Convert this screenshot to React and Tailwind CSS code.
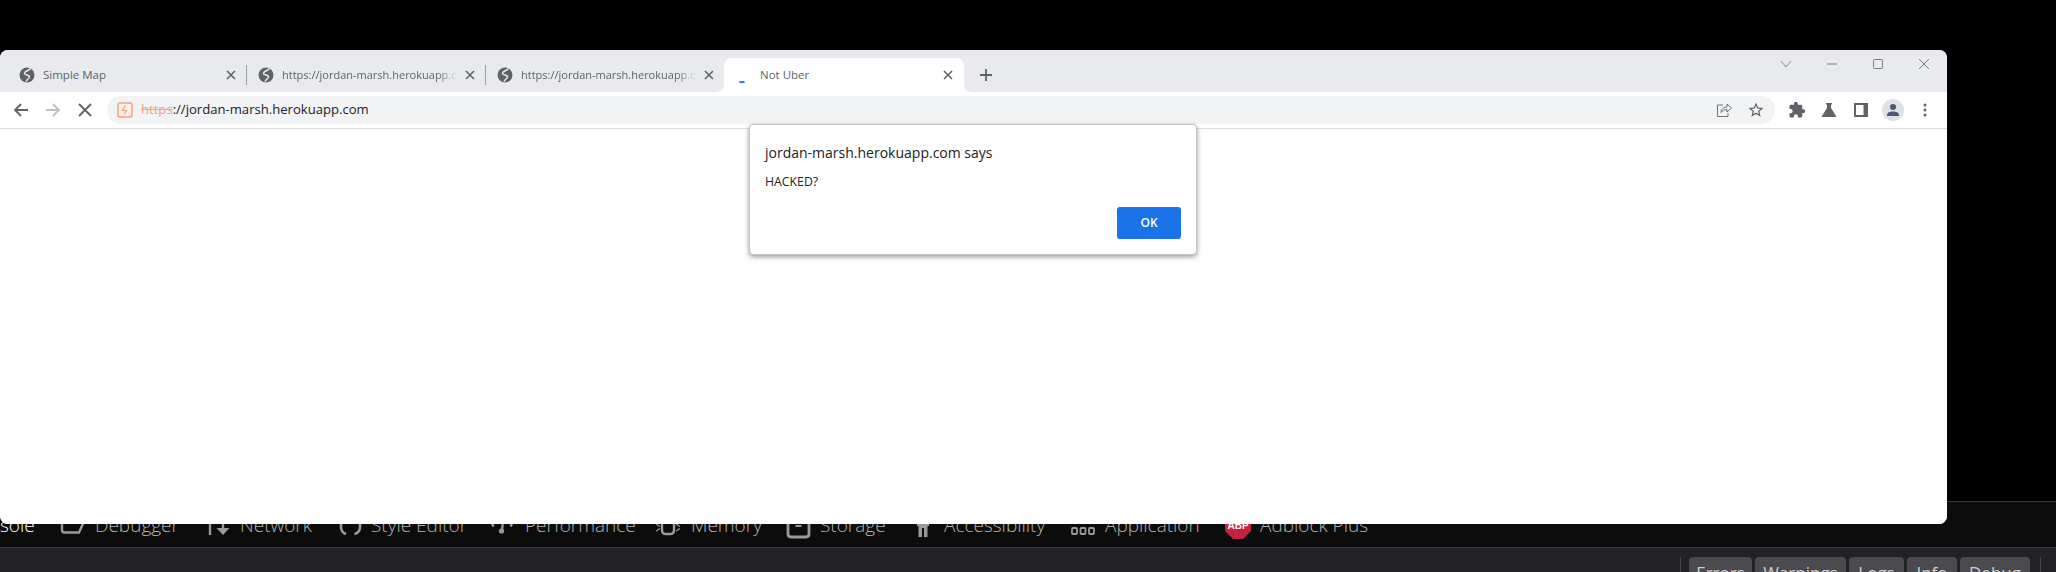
function Globe() {
  return (
    <svg width="18" height="18" viewBox="0 0 18 18" className="shrink-0" fill="none">
      <circle cx="9" cy="9" r="7.500" fill="#5f6368" />
      <path d="M12.500 2.500C10.500 5 6.500 5 6.500 7.500c0 2 4.500 1 5 3 .4 2-2.500 2.500-3.500 5" stroke="#e8eaed" strokeWidth="1.500" />
    </svg>
  );
}

function CloseX({ className = "" }) {
  return (
    <svg width="10" height="10" viewBox="0 0 10 10" className={"shrink-0 " + className} stroke="#5f6368" strokeWidth="1.6" fill="none">
      <path d="M1 1l8 8M9 1l-8 8" />
    </svg>
  );
}

function InactiveTab({ title, fade, className, separator = true }) {
  return (
    <div className={"flex h-[34px] shrink-0 items-center " + className}>
      <Globe />
      <span
        className={
          fade
            ? "ml-[7px] w-[176px] overflow-hidden whitespace-nowrap text-[11px] text-[#5f6368] [mask-image:linear-gradient(to_right,black_88%,transparent)]"
            : "ml-[7px] w-[176px] overflow-hidden whitespace-nowrap text-[11.5px] text-[#5f6368]"
        }
      >
        {title}
      </span>
      <CloseX className="ml-[7px]" />
      {separator && <div className="ml-[10px] h-[20px] w-px shrink-0 bg-[#9aa0a6]" />}
    </div>
  );
}

function DevItem({ className, icon, children, color = "text-[#b1b1b3]" }) {
  return (
    <div className={"flex shrink-0 items-center " + className}>
      {icon}
      <span className={"whitespace-nowrap text-[19px] font-light " + color}>{children}</span>
    </div>
  );
}

const devIcon = { width: 26, height: 26, viewBox: "0 0 26 26", fill: "none", stroke: "#9a9a9c", strokeWidth: 2.4 };

function Filter({ className, children }) {
  return (
    <div className={"flex h-[30px] shrink-0 justify-center rounded-t-[4px] bg-[#4a4a4f] pt-[3px] text-[17px] text-[#d0d0d2] " + className}>
      {children}
    </div>
  );
}

export default function App() {
  return (
    <div className="relative flex h-[572px] w-[2056px] flex-col overflow-hidden bg-black font-['Open_Sans','Noto_Sans',sans-serif]">
      {/* page behind the window */}
      <div className="h-[501px] shrink-0" />
      <div className="flex h-[46px] shrink-0 items-center border-t border-[#38383d] bg-[#0c0c0d] pt-[2px]">
        <DevItem className="w-[60px]" color="text-white">sole</DevItem>
        <DevItem className="w-[147px]" icon={<svg {...devIcon} className="mr-[9px]"><path d="M2 8v9c0 1.500 1 2.500 2.500 2.500h14.500l5-11" /></svg>}>Debugger</DevItem>
        <DevItem className="w-[128px]" icon={<svg {...devIcon} className="mr-[7px]"><path d="M3 2v20" /><path d="M16 8v12" /><path d="M9.500 15l6.500 7 6.500-7z" fill="#9a9a9c" stroke="none" /></svg>}>Network</DevItem>
        <DevItem className="w-[154px]" icon={<svg width="32" height="26" viewBox="0 0 32 26" fill="none" stroke="#9a9a9c" strokeWidth="2.600" className="mr-[4px]"><path d="M6 6v8c0 2 .5 3 1 4s1 2 4 3" /><path d="M25 6v8c0 2-.5 3-1 4s-1 2-4.500 3" /></svg>}>Style Editor</DevItem>
        <DevItem className="w-[166px]" icon={<svg {...devIcon} className="mr-[10px]"><path d="M3 9c0 1.500.5 3 1.500 4.500" /><path d="M23 9c0 1.500-.5 3-1.500 4.500" /><path d="M14 8l-1 9" /><circle cx="12.500" cy="18" r="2.600" fill="#9a9a9c" stroke="none" /></svg>}>Performance</DevItem>
        <DevItem className="w-[130px]" icon={<svg {...devIcon} className="mr-[10px]"><path d="M7 6v11c0 2.500 1 4 3.500 4h5c2.500 0 3.500-1.500 3.500-4V6" /><path d="M1 11l4 2.500M1 18l4-2.500M21 11l4 2.500M21 18l4-2.500" strokeWidth="1.400" /></svg>}>Memory</DevItem>
        <DevItem className="w-[130px]" icon={<svg width="27" height="26" viewBox="0 0 27 26" fill="none" stroke="#9a9a9c" strokeWidth="2.800" className="mr-[8px]"><path d="M3 2v19c0 2 1 3 3 3h15c2 0 3-1 3-3V2" /><path d="M10.500 13h6" strokeWidth="2" /></svg>}>Storage</DevItem>
        <DevItem className="w-[156px]" icon={<svg width="16" height="26" viewBox="0 0 16 26" fill="#9a9a9c" className="mr-[13px]"><path d="M2 4h12v9h-1.500v11H9V15H7v9H3.500V13H2z" /></svg>}>Accessibility</DevItem>
        <DevItem className="w-[154px]" icon={<svg width="24" height="26" viewBox="0 0 24 26" fill="none" stroke="#9a9a9c" strokeWidth="1.800" className="mr-[10px]"><rect x="1" y="4" width="5" height="6" rx="1" /><rect x="9.500" y="4" width="5" height="6" rx="1" /><rect x="18" y="4" width="5" height="6" rx="1" /><rect x="1" y="15" width="5" height="6" rx="1" /><rect x="9.500" y="15" width="5" height="6" rx="1" /><rect x="18" y="15" width="5" height="6" rx="1" /></svg>}>Application</DevItem>
        <DevItem className="" icon={<svg width="26" height="26" viewBox="0 0 26 26" className="mr-[9px]"><path d="M8 -2h10l8 8v12l-8 8H8l-8-8V6z" fill="#c8203f" /><text x="13" y="16" textAnchor="middle" fontSize="10" fontWeight="700" fill="#fff" fontFamily="'Liberation Sans',sans-serif">ABP</text></svg>}>Adblock Plus</DevItem>
      </div>
      <div className="flex min-h-0 flex-1 items-start overflow-hidden border-t border-[#38383d] bg-[#232327] pl-[1680px] pt-[9px]">
        <div className="mr-[8px] h-[30px] w-px shrink-0 bg-[#45454a]" />
        <div className="flex gap-[3px]">
          <Filter className="w-[63px]">Errors</Filter>
          <Filter className="w-[91px]">Warnings</Filter>
          <Filter className="w-[55px]">Logs</Filter>
          <Filter className="w-[50px]">Info</Filter>
          <Filter className="w-[70px]">Debug</Filter>
        </div>
        <div className="ml-[10px] h-[30px] w-px shrink-0 bg-[#45454a]" />
      </div>

      {/* browser window */}
      <div className="absolute left-0 top-[50px] flex h-[474px] w-[1947px] flex-col overflow-hidden rounded-[8px] bg-white">
        {/* tab strip */}
        <div className="relative flex h-[42px] shrink-0 items-end bg-[#e8eaed]">
          <InactiveTab title="Simple Map" className="w-[247px] pl-[18px]" />
          <InactiveTab title="https://jordan-marsh.herokuapp.com" fade className="w-[239px] pl-[10px]" />
          <InactiveTab title="https://jordan-marsh.herokuapp.com" fade separator={false} className="w-[238px] pl-[10px]" />
          <div className="relative flex h-[34px] w-[240px] shrink-0 items-center rounded-t-[8px] bg-white pl-[14px] pr-[11px]">
            <svg width="8" height="8" viewBox="0 0 8 8" className="absolute bottom-0 left-[-8px]"><path d="M8 0v8H0c4 0 8-3 8-8z" fill="#fff" /></svg>
            <svg width="8" height="8" viewBox="0 0 8 8" className="absolute bottom-0 right-[-8px]"><path d="M0 0v8h8C4 8 0 5 0 0z" fill="#fff" /></svg>
            <svg width="12" height="12" viewBox="0 0 12 12" fill="none" className="mt-[8px] shrink-0">
              <path d="M1.500 8.500c1.500 1 3.500 1 5 0" stroke="#1a73e8" strokeWidth="2" />
            </svg>
            <span className="ml-[10px] flex-1 text-[11.5px] text-[#5f6368]">Not Uber</span>
            <CloseX />
          </div>
          <svg width="14" height="14" viewBox="0 0 14 14" className="mb-[10px] ml-[15px] shrink-0" stroke="#5f6368" strokeWidth="1.800">
            <path d="M7 1v12M1 7h12" />
          </svg>
          <div className="ml-auto flex h-full items-start pt-[7px]">
            <svg width="14" height="14" viewBox="0 0 14 14" fill="none" stroke="#8a8d91" strokeWidth="1" className="mr-[32px]"><path d="M2 4l5 6 5-6" /></svg>
            <svg width="14" height="14" viewBox="0 0 14 14" fill="none" stroke="#7a7d80" strokeWidth="1" className="mr-[32px]"><path d="M2 7h10" /></svg>
            <svg width="14" height="14" viewBox="0 0 14 14" fill="none" stroke="#7a7d80" strokeWidth="1" className="mr-[32px]"><rect x="2.500" y="2.500" width="9" height="9" rx="1" /></svg>
            <svg width="14" height="14" viewBox="0 0 14 14" fill="none" stroke="#7a7d80" strokeWidth="1" className="mr-[16px]"><path d="M2 2l10 10M12 2L2 12" /></svg>
          </div>
        </div>

        {/* toolbar */}
        <div className="flex h-[37px] shrink-0 items-center border-b border-[#dadce0] pb-[1px] pl-[12px]">
          <svg width="18" height="18" viewBox="0 0 18 18" fill="none" stroke="#5f6368" strokeWidth="1.800" className="shrink-0"><path d="M16 9H3M9 3L3 9l6 6" /></svg>
          <svg width="18" height="18" viewBox="0 0 18 18" fill="none" stroke="#bdc1c6" strokeWidth="1.800" className="ml-[14px] shrink-0"><path d="M2 9h13M9 3l6 6-6 6" /></svg>
          <svg width="18" height="18" viewBox="0 0 18 18" fill="none" stroke="#5f6368" strokeWidth="1.800" className="ml-[14px] shrink-0"><path d="M3 3l12 12M15 3L3 15" /></svg>
          <div className="ml-[13px] flex h-[28px] w-[1668px] shrink-0 items-center rounded-full bg-[#f1f3f4] pl-[10px] pr-[10px]">
            <svg width="16" height="16" viewBox="0 0 16 16" fill="none" className="shrink-0">
              <rect x="1" y="1" width="14" height="14" rx="2" stroke="#f6a27e" strokeWidth="1.500" fill="#fdf0ea" />
              <path d="M8.500 3.500L5.500 8.500h4L7 12.500" stroke="#f6a27e" strokeWidth="1.200" />
            </svg>
            <span className="ml-[8px] whitespace-nowrap text-[13.1px] text-[#202124]">
              <span className="text-[#f6a27e] line-through">https</span>://jordan-marsh.herokuapp.com
            </span>
            <svg width="18" height="18" viewBox="0 0 18 18" fill="none" stroke="#6f7377" strokeWidth="1" className="ml-auto shrink-0">
              <path d="M8 4H2.500v11.500H13V12M6 11.500c0-3.500 2.500-5.500 6-5.500V3l4.500 4-4.500 4V8.500c-2.500 0-4.500.8-6 3z" />
            </svg>
            <svg width="18" height="18" viewBox="0 0 24 24" fill="#5f6368" className="ml-[14px] shrink-0">
              <path d="M22 9.240l-7.190-.62L12 2 9.190 8.630 2 9.240l5.460 4.730L5.820 21 12 17.270 18.180 21l-1.630-7.030L22 9.240zM12 15.400l-3.760 2.270 1-4.280-3.320-2.880 4.380-.38L12 6.100l1.710 4.040 4.380.38-3.320 2.880 1 4.280L12 15.400z" />
            </svg>
          </div>
          <svg width="18" height="18" viewBox="0 0 24 24" fill="#5f6368" className="ml-[13px] shrink-0">
            <path d="M20.500 11H19V7c0-1.100-.9-2-2-2h-4V3.500C13 2.120 11.880 1 10.500 1S8 2.120 8 3.500V5H4c-1.100 0-1.990.9-1.990 2v3.800H3.500c1.490 0 2.700 1.210 2.700 2.700s-1.210 2.700-2.700 2.700H2V20c0 1.100.9 2 2 2h3.800v-1.500c0-1.490 1.210-2.700 2.700-2.700 1.490 0 2.700 1.210 2.700 2.700V22H17c1.100 0 2-.9 2-2v-4h1.500c1.380 0 2.500-1.120 2.500-2.500S21.880 11 20.500 11z" />
          </svg>
          <svg width="16" height="16" viewBox="0 0 16 16" fill="#5f6368" className="ml-[15px] shrink-0">
            <path d="M5 1h6v1.500h-1v3.500l5 8c.3.600 0 1-.6 1H1.600c-.6 0-.9-.4-.6-1l5-8V2.500H5z" />
          </svg>
          <svg width="16" height="16" viewBox="0 0 16 16" className="ml-[16px] shrink-0">
            <rect x="1" y="1" width="14" height="14" fill="#5f6368" />
            <rect x="3" y="3" width="7.500" height="10" fill="#fff" />
          </svg>
          <div className="ml-[13px] flex h-[22px] w-[22px] shrink-0 items-center justify-center rounded-full bg-[#dee1e6]">
            <svg width="14" height="14" viewBox="0 0 14 14" fill="#4b5a70">
              <circle cx="7" cy="4" r="3" />
              <path d="M1 13v-1c0-2.500 3-3.500 6-3.500s6 1 6 3.500v1z" />
            </svg>
          </div>
          <svg width="4" height="14" viewBox="0 0 4 14" fill="#5f6368" className="ml-[19px] shrink-0">
            <circle cx="2" cy="2" r="1.500" /><circle cx="2" cy="7" r="1.500" /><circle cx="2" cy="12" r="1.500" />
          </svg>
        </div>

        <div className="flex-1 bg-white" />
      </div>

      {/* alert dialog */}
      <div className="absolute left-[749px] top-[124px] h-[131px] w-[448px] rounded-[4px] border border-[#c4c4c4] bg-white pl-[15px] pr-[15px] pt-[18px] shadow-[0_2px_5px_rgba(0,0,0,0.4)]">
        <div className="text-[14px] leading-[20px] text-[#202124]">jordan-marsh.herokuapp.com says</div>
        <div className="mt-[11px] text-[12.3px] leading-[16px] text-[#202124]">HACKED?</div>
        <div className="mt-[17px] flex justify-end">
          <button className="h-[32px] w-[64px] rounded-[3px] bg-[#1a73e8] text-[12px] font-semibold text-white">OK</button>
        </div>
      </div>
    </div>
  );
}
